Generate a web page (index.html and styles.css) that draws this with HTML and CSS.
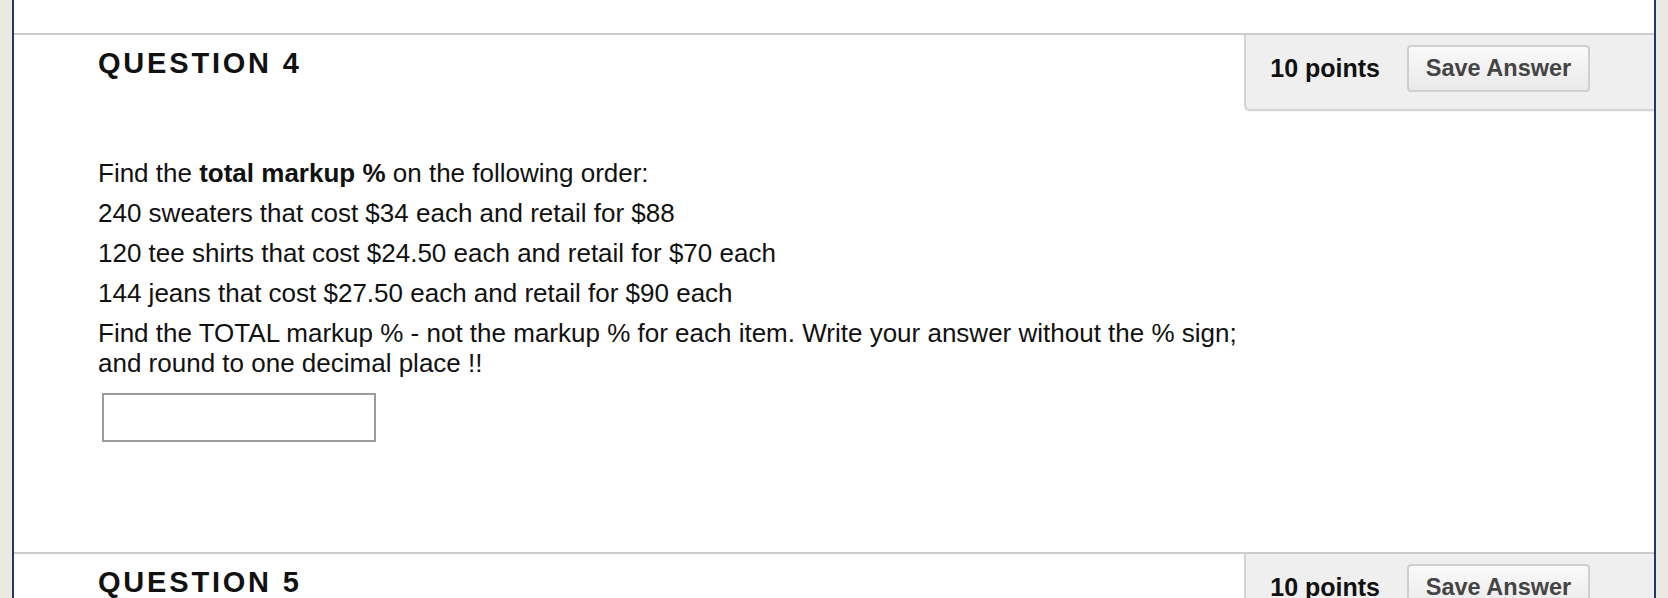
FILE: index.html
```html
<!DOCTYPE html>
<html>
<head>
<meta charset="utf-8">
<link rel="stylesheet" href="styles.css">
</head>
<body>
<div class="frame">
  <div class="prev-space"></div>
  <div class="question">
    <div class="q-header">
      <h3 class="q-title">QUESTION 4</h3>
      <div class="points-box">
        <span class="points">10 points</span>
        <button class="save-btn">Save Answer</button>
      </div>
    </div>
    <div class="q-body">
      <p>Find the <strong>total markup %</strong> on the following order:</p>
      <p>240 sweaters that cost $34 each and retail for $88</p>
      <p>120 tee shirts that cost $24.50 each and retail for $70 each</p>
      <p>144 jeans that cost $27.50 each and retail for $90 each</p>
      <p>Find the TOTAL markup % - not the markup % for each item. Write your answer without the % sign; and round to one decimal place !!</p>
      <input class="answer" type="text">
    </div>
  </div>
  <div class="question">
    <div class="q-header">
      <h3 class="q-title">QUESTION 5</h3>
      <div class="points-box">
        <span class="points">10 points</span>
        <button class="save-btn">Save Answer</button>
      </div>
    </div>
  </div>
</div>
</body>
</html>
```

FILE: styles.css
```css
html, body {
  margin: 0;
  padding: 0;
  height: 100%;
  overflow: hidden;
}
body {
  background: #ebeae2;
  font-family: "Liberation Sans", Arial, sans-serif;
  color: #111;
}
.frame {
  margin: 0 12px;
  min-height: 100%;
  background: #fff;
  border-left: 2px solid #1d3b63;
  border-right: 2px solid #1d3b63;
}
.prev-space {
  height: 33px;
}
.question {
  border-top: 2px solid #cbcbcb;
}
.q-header {
  display: flex;
  justify-content: space-between;
  align-items: flex-start;
}
.q-title {
  margin: 12px 0 0 84px;
  font-size: 29px;
  font-weight: bold;
  letter-spacing: 2.8px;
  color: #111;
}
.points-box {
  display: flex;
  align-items: center;
  gap: 27px;
  margin-top: -2px;
  padding: 10px 64px 17px 24px;
  background: #efefef;
  border: 2px solid #d4d4d4;
  border-top-color: #cbcbcb;
  border-right: none;
  border-radius: 0 0 0 6px;
  box-shadow: 0 1px 1px rgba(0,0,0,0.05);
}
.points {
  font-size: 25px;
  font-weight: bold;
  color: #111;
}
.save-btn {
  width: 183px;
  height: 47px;
  padding: 0;
  font-family: "Liberation Sans", Arial, sans-serif;
  font-size: 23.5px;
  font-weight: bold;
  color: #444;
  background: linear-gradient(#fafafa, #e9e9e9);
  border: 2px solid #cfcfcf;
  border-radius: 4px;
}
.q-body {
  width: 1170px;
  padding: 47px 0 110px 84px;
  font-size: 26px;
}
.q-body p {
  margin: 0 0 10px;
  line-height: 30px;
}
.q-body strong {
  color: #111;
}
.answer {
  display: block;
  margin: 15px 0 0 4px;
  width: 274px;
  height: 49px;
  box-sizing: border-box;
  border: 2px solid #9c9c9c;
  background: #fff;
  font-size: 22px;
}
```
